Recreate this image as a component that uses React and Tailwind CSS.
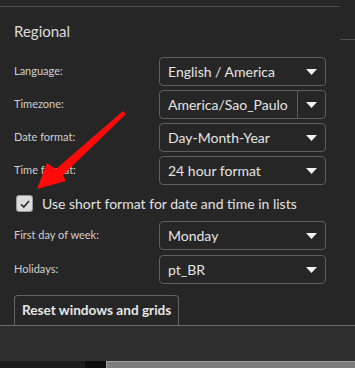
const rows = [
  { label: 'Language:', value: 'English / America' },
  { label: 'Timezone:', value: 'America/Sao_Paulo', split: true },
  { label: 'Date format:', value: 'Day-Month-Year' },
  { label: 'Time format:', value: '24 hour format' },
]

const rows2 = [
  { label: 'First day of week:', value: 'Monday' },
  { label: 'Holidays:', value: 'pt_BR' },
]

function Caret() {
  return (
    <svg className="w-[11px] h-[6px]" viewBox="0 0 11 6">
      <polygon points="0,0 11,0 5.5,6" fill="#f0f0f0" />
    </svg>
  )
}

function Select({ value, split }) {
  return (
    <div className="w-[167px] h-[29px] flex items-center border border-[#5e5e5e] rounded-[4px] bg-[#262626]">
      <span className="flex-1 pl-[8px] text-[14px] text-[#e4e4e4] whitespace-nowrap">{value}</span>
      {split ? (
        <div className="h-full w-[28px] border-l border-[#5e5e5e] flex items-center justify-center">
          <Caret />
        </div>
      ) : (
        <div className="w-[28px] flex items-center justify-center">
          <Caret />
        </div>
      )}
    </div>
  )
}

function Row({ label, value, split }) {
  return (
    <div className="flex items-center h-[29px]">
      <span className="w-[145px] text-[11px] text-[#cfcfcf]">{label}</span>
      <Select value={value} split={split} />
    </div>
  )
}

export default function App() {
  return (
    <div className="relative w-[355px] h-[368px] bg-[#262626] overflow-hidden" style={{ fontFamily: 'Lato, "Open Sans", sans-serif' }}>
      <div className="flex h-[325px]">
        <div className="w-[340px] pt-[6px]">
          <div className="border-t border-[#4f4f4f] px-[14px]">
            <h2 className="mt-[15px] text-[15px] leading-[18px] text-[#dcdcdc]">Regional</h2>
            <div className="mt-[17px] flex flex-col gap-[4px]">
              {rows.map((r) => (
                <Row key={r.label} {...r} />
              ))}
            </div>
            <label className="mt-[10px] h-[17px] flex items-center gap-[9px] pl-[2px]">
              <span className="w-[17px] h-[17px] rounded-[3px] bg-[#dcdcdc] border border-[#9a9a9a] flex items-center justify-center">
                <svg className="w-[12px] h-[12px]" viewBox="0 0 12 12">
                  <path d="M2 6.2 L4.8 9 L10 3" fill="none" stroke="#2a2a2a" strokeWidth="1.6" />
                </svg>
              </span>
              <span className="text-[14px] leading-[17px] text-[#e2e2e2] whitespace-nowrap">Use short format for date and time in lists</span>
            </label>
            <div className="mt-[9px] flex flex-col gap-[5px]">
              {rows2.map((r) => (
                <Row key={r.label} {...r} />
              ))}
            </div>
            <button className="mt-[11px] h-[30px] px-[7px] border border-b-0 border-[#646464] rounded-t-[4px] text-[13.6px] font-bold text-[#e6e6e6]">
              Reset windows and grids
            </button>
          </div>
        </div>
        <div className="flex-1 pt-[39px]">
          <div className="border-t border-[#4f4f4f]" />
        </div>
      </div>
      <div className="border-t border-[#6a6a6a] h-[36px] bg-[#2e2e2e]" />
      <div className="flex h-[7px]">
        <div className="w-[85px] bg-[#1c1c1c]" />
        <div className="w-[21px] bg-[#0c0c0c]" />
        <div className="flex-1 bg-[#7c7c7c] border-t border-l border-[#a0a0a0]" />
      </div>
      <svg className="absolute left-0 top-0 w-[355px] h-[368px] pointer-events-none" viewBox="0 0 355 368">
        <polygon points="123,111 126,114 63,175 66,181 37,189 47,163 56,169" fill="#ff0a0a" />
      </svg>
    </div>
  )
}
